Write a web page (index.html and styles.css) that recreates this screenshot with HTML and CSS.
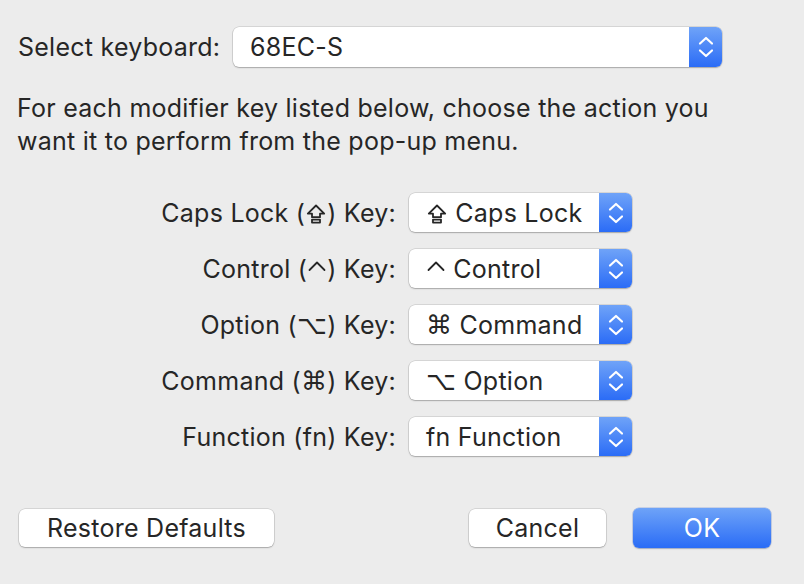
FILE: index.html
```html
<!DOCTYPE html>
<html>
<head>
<meta charset="utf-8">
<link rel="stylesheet" href="styles.css">
</head>
<body>
<div class="dialog">
  <div class="kbd-row">
    <span class="label">Select keyboard:</span>
    <div class="popup popup-wide">
      <span class="popup-text">68EC-S</span>
      <span class="stepper"><svg width="16" height="24" viewBox="0 0 16 24"><polyline points="2,8.5 8,3 14,8.5" /><polyline points="2,15.5 8,21 14,15.5" /></svg></span>
    </div>
  </div>
  <p class="intro">For each modifier key listed below, choose the action you want it to perform from the pop-up menu.</p>
  <div class="keys">
    <span class="key-label">Caps Lock (<svg class="ico" width="20" height="20" viewBox="0 0 20 20"><path d="M10 1.5 L18.2 9.6 H14 V13.2 H6 V9.6 H1.8 Z" /><rect x="6" y="15.6" width="8" height="3" /></svg>) Key:</span>
    <div class="popup"><span class="popup-text"><svg class="ico" width="20" height="20" viewBox="0 0 20 20"><path d="M10 1.5 L18.2 9.6 H14 V13.2 H6 V9.6 H1.8 Z" /><rect x="6" y="15.6" width="8" height="3" /></svg> Caps Lock</span><span class="stepper"><svg width="16" height="24" viewBox="0 0 16 24"><polyline points="2,8.5 8,3 14,8.5" /><polyline points="2,15.5 8,21 14,15.5" /></svg></span></div>

    <span class="key-label">Control (<svg class="ico" width="18" height="20" viewBox="0 0 18 20"><polyline points="1.5,10 9,2.5 16.5,10" /></svg>) Key:</span>
    <div class="popup"><span class="popup-text"><svg class="ico" width="18" height="20" viewBox="0 0 18 20"><polyline points="1.5,10 9,2.5 16.5,10" /></svg> Control</span><span class="stepper"><svg width="16" height="24" viewBox="0 0 16 24"><polyline points="2,8.5 8,3 14,8.5" /><polyline points="2,15.5 8,21 14,15.5" /></svg></span></div>

    <span class="key-label">Option (<span class="sym">⌥</span>) Key:</span>
    <div class="popup"><span class="popup-text"><span class="sym">⌘</span> Command</span><span class="stepper"><svg width="16" height="24" viewBox="0 0 16 24"><polyline points="2,8.5 8,3 14,8.5" /><polyline points="2,15.5 8,21 14,15.5" /></svg></span></div>

    <span class="key-label">Command (<span class="sym">⌘</span>) Key:</span>
    <div class="popup"><span class="popup-text"><span class="sym">⌥</span> Option</span><span class="stepper"><svg width="16" height="24" viewBox="0 0 16 24"><polyline points="2,8.5 8,3 14,8.5" /><polyline points="2,15.5 8,21 14,15.5" /></svg></span></div>

    <span class="key-label">Function (fn) Key:</span>
    <div class="popup"><span class="popup-text">fn Function</span><span class="stepper"><svg width="16" height="24" viewBox="0 0 16 24"><polyline points="2,8.5 8,3 14,8.5" /><polyline points="2,15.5 8,21 14,15.5" /></svg></span></div>
  </div>
  <div class="buttons">
    <button class="btn btn-restore">Restore Defaults</button>
    <span class="spacer"></span>
    <button class="btn btn-cancel">Cancel</button>
    <button class="btn btn-ok">OK</button>
  </div>
</div>
</body>
</html>
```
FILE: styles.css
```css
html, body {
  margin: 0;
  padding: 0;
  background: #ececec;
}
body {
  width: 804px;
  height: 584px;
  overflow: hidden;
  font-family: "Inter", "DejaVu Sans", sans-serif;
  font-size: 25px;
  letter-spacing: 0.25px;
  color: #262626;
}
.dialog {
  padding: 27px 33px 0 18px;
}
.kbd-row {
  display: flex;
  align-items: center;
}
.label {
  width: 215px;
}
.popup {
  position: relative;
  display: flex;
  align-items: center;
  height: 39px;
  background: #fff;
  border-radius: 6px;
  box-shadow: 0 0 0 0.5px rgba(0,0,0,0.18), 0 1px 1.5px rgba(0,0,0,0.22);
  overflow: hidden;
}
.popup-wide {
  width: 489px;
  height: 40px;
}
.popup-text {
  flex: 1;
  padding-left: 17px;
  white-space: nowrap;
}
.stepper {
  width: 33px;
  align-self: stretch;
  display: flex;
  align-items: center;
  justify-content: center;
  background: linear-gradient(#6fa3f8, #2b6cf6);
}
.stepper svg {
  fill: none;
  stroke: #fff;
  stroke-width: 2.2;
  stroke-linecap: round;
  stroke-linejoin: round;
}
.ico {
  vertical-align: -2px;
  fill: none;
  stroke: #262626;
  stroke-width: 1.8;
  stroke-linejoin: round;
  stroke-linecap: round;
  margin: 0 1px;
}
.sym {
  font-family: "DejaVu Sans", sans-serif;
  font-size: 26px;
  line-height: 0;
}
.intro {
  margin: 25px 0 0 -1px;
  line-height: 33px;
  width: 720px;
}
.keys {
  display: grid;
  grid-template-columns: 378px 223px;
  column-gap: 13px;
  row-gap: 17px;
  align-items: center;
  margin-top: 35px;
}
.key-label {
  text-align: right;
  white-space: nowrap;
}
.keys .popup-text {
  padding-left: 17px;
}
.buttons {
  display: flex;
  align-items: center;
  margin-top: 52px;
  padding-left: 1px;
}
.spacer {
  flex: 1;
}
.btn {
  font-family: inherit;
  font-size: 25px;
  letter-spacing: 0.25px;
  color: #262626;
  height: 38px;
  border: none;
  border-radius: 6px;
  background: #fff;
  box-shadow: 0 0 0 0.5px rgba(0,0,0,0.18), 0 1px 1.5px rgba(0,0,0,0.22);
  padding: 0;
}
.btn-restore {
  width: 255px;
}
.btn-cancel {
  width: 137px;
  margin-right: 27px;
}
.btn-ok {
  width: 138px;
  height: 40px;
  color: #fff;
  background: linear-gradient(#6ea3f8, #2a6cf6);
  box-shadow: 0 0 0 0.5px rgba(30,80,200,0.35), 0 1px 1.5px rgba(0,0,0,0.2);
}
```
